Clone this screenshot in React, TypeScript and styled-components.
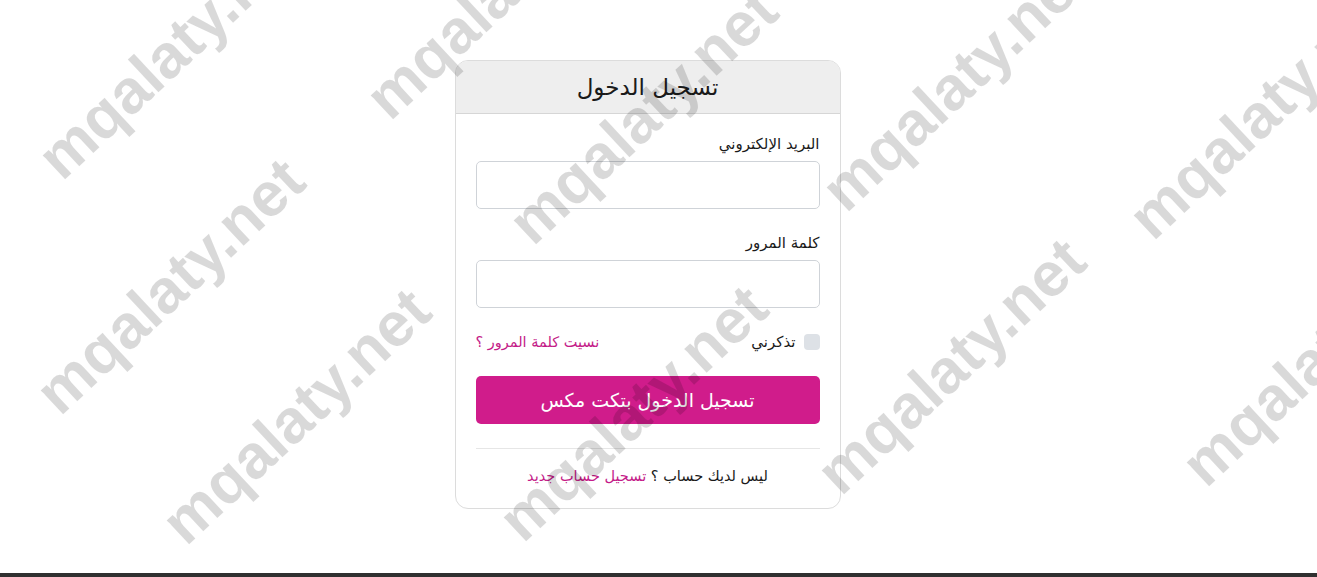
import React, { FC } from "react";
import styled, { createGlobalStyle } from "styled-components";

const GlobalStyle = createGlobalStyle`
  html, body {
    margin: 0;
    padding: 0;
    background: #ffffff;
  }
  body {
    font-family: "DejaVu Sans", "Noto Sans", sans-serif;
    color: #212529;
  }
  * {
    box-sizing: border-box;
  }
`;

const Page = styled.div`
  position: relative;
  width: 100%;
  height: 577px;
  overflow: hidden;
  display: flex;
  flex-direction: column;
`;

const Main = styled.main`
  flex: 1;
  display: flex;
  justify-content: center;
  align-items: flex-start;
  padding: 60px 22px 0 0;
`;

const Footer = styled.footer`
  height: 4px;
  background: #303030;
`;

const Card = styled.div`
  width: 386px;
  direction: rtl;
  background: #ffffff;
  border: 1px solid #dcdcdc;
  border-radius: 13px;
  overflow: hidden;
`;

const CardHeader = styled.div`
  height: 53px;
  background: #eeeeee;
  border-bottom: 1px solid #d6d6d6;
  display: flex;
  align-items: center;
  justify-content: center;
`;

const Title = styled.h2`
  margin: 0;
  font-size: 23px;
  font-weight: normal;
  color: #1a1a1a;
`;

const CardBody = styled.form`
  padding: 21px 20px 23px;
  display: flex;
  flex-direction: column;
`;

const Field = styled.div<{ $gap?: number }>`
  display: flex;
  flex-direction: column;
  margin-bottom: ${(p) => p.$gap ?? 25}px;
`;

const Label = styled.label`
  font-size: 15px;
  color: #1a1a1a;
  margin-bottom: 8px;
  line-height: 18px;
`;

const Input = styled.input`
  height: 48px;
  border: 1px solid #cfd3d8;
  border-radius: 5px;
  background: #ffffff;
  padding: 0 12px;
  font-size: 15px;
  outline: none;
`;

const OptionsRow = styled.div`
  display: flex;
  align-items: center;
  justify-content: space-between;
  height: 22px;
`;

const Remember = styled.label`
  display: flex;
  align-items: center;
  gap: 8px;
  font-size: 15px;
  color: #1a1a1a;
`;

const CheckBox = styled.span`
  width: 16px;
  height: 16px;
  border-radius: 4px;
  background: #dde1e6;
`;

const PinkLink = styled.a<{ $size?: number }>`
  color: #c41b88;
  text-decoration: none;
  font-size: ${(p) => p.$size ?? 14.5}px;
`;

const SubmitButton = styled.button`
  margin-top: 23px;
  height: 48px;
  border: none;
  border-radius: 5px;
  background: #d01c8b;
  color: #ffffff;
  font-family: inherit;
  font-size: 19px;
`;

const Divider = styled.hr`
  border: none;
  border-top: 1px solid #e6e6e6;
  margin: 24px 0 0;
`;

const SignupLine = styled.p`
  margin: 19px 0 0;
  line-height: 17px;
  text-align: center;
  font-size: 14.5px;
  color: #1a1a1a;
`;

const Watermarks = styled.div`
  position: absolute;
  inset: 0;
  pointer-events: none;
`;

const Mark = styled.span`
  position: absolute;
  white-space: nowrap;
  font-family: "Liberation Sans", Arial, sans-serif;
  font-weight: bold;
  font-size: 62px;
  line-height: 1;
  color: rgba(0, 0, 0, 0.15);
  transform: translate(-50%, -50%) rotate(-43deg);
`;

const marks: [number, number][] = [
  [172, 51],
  [500, -9],
  [643, 116],
  [956, 83],
  [1263, 111],
  [170, 286],
  [296, 416],
  [633, 413],
  [951, 366],
  [1316, 358],
];

const App: FC = () => {
  return (
    <Page>
      <GlobalStyle />
      <Main>
        <Card>
          <CardHeader>
            <Title>تسجيل الدخول</Title>
          </CardHeader>
          <CardBody onSubmit={(e) => e.preventDefault()}>
            <Field>
              <Label>البريد الإلكتروني</Label>
              <Input type="email" />
            </Field>
            <Field $gap={23}>
              <Label>كلمة المرور</Label>
              <Input type="password" />
            </Field>
            <OptionsRow>
              <Remember>
                <CheckBox />
                تذكرني
              </Remember>
              <PinkLink href="#">نسيت كلمة المرور ؟</PinkLink>
            </OptionsRow>
            <SubmitButton type="submit">تسجيل الدخول بتكت مكس</SubmitButton>
            <Divider />
            <SignupLine>
              ليس لديك حساب ؟ <PinkLink href="#">تسجيل حساب جديد</PinkLink>
            </SignupLine>
          </CardBody>
        </Card>
      </Main>
      <Footer />
      <Watermarks>
        {marks.map(([x, y], idx) => (
          <Mark key={idx} style={{ left: x, top: y }}>
            mqalaty.net
          </Mark>
        ))}
      </Watermarks>
    </Page>
  );
};

export default App;
